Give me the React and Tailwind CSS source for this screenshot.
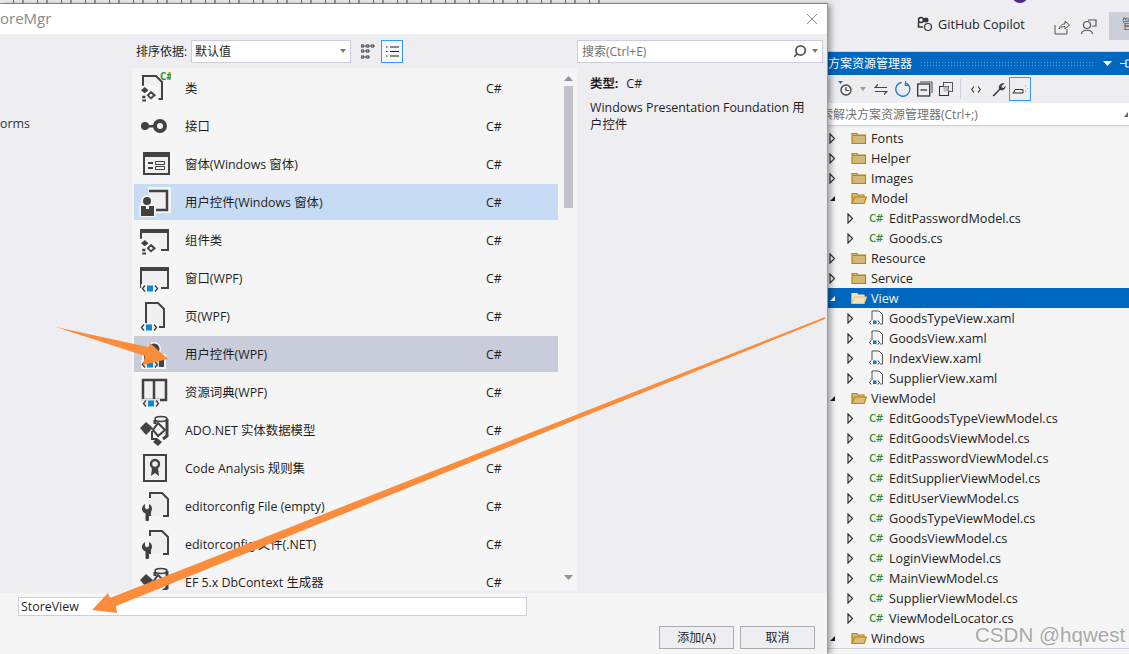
import { Search } from 'lucide-react'

const FONT = { fontFamily: '"Open Sans", "Noto Sans CJK SC", sans-serif' }

const DARK = '#424242'
const LIGHT = '#f0eff1'

// little <> badge with the blue square, used on all the WPF icons
const CodeBadge = ({ x = 0, y = 0 }) => (
  <g transform={`translate(${x} ${y})`}>
    <rect x="-1" y="-1" width="18" height="9" fill="#f5f5f5" opacity="0.9" />
    <path d="M3 0.5 L0.5 3.5 L3 6.5 M13 0.5 L15.5 3.5 L13 6.5" fill="none" stroke={DARK} strokeWidth="1.4" />
    <rect x="5" y="0.5" width="6" height="6" fill="#0a8ad2" />
  </g>
)

const Gears = ({ x = 0, y = 0 }) => (
  <g transform={`translate(${x} ${y}) scale(1.25)`} fill={DARK}>
    <rect x="-1" y="-1" width="15" height="13" fill="#f5f5f5" />
    <path d="M3 0 L6 2.5 L3 5 L0 2.5 Z" />
    <path d="M8 3 L12 6.5 L8 10 L4.5 6.5 Z" />
    <path d="M1 7 h2.500 v2 h-2.500 Z M1 10 h3 v1.500 h-3 Z" />
    <circle cx="8" cy="6.5" r="1.2" fill="#f5f5f5" />
  </g>
)

const FileShape = ({ x, y, w, h }) => (
  <path
    d={`M${x} ${y + h} V${y} H${x + w - 6} L${x + w} ${y + 6} V${y + h} H${x + w - 5}`}
    fill={LIGHT}
    stroke={DARK}
    strokeWidth="2"
  />
)

const Wrench = ({ x, y }) => (
  <path
    transform={`translate(${x} ${y})`}
    d="M1 0 V4 L3 5.500 L5 4 V0 C7.500 1 8 3 8 5 C8 7.500 6.500 8.500 5 9.500 V16 C5 17.500 1.500 17.500 1.500 16 V9.500 C-0.500 8.500 -2 7 -2 5 C-2 3 -1 1 1 0 Z"
    fill={DARK}
  />
)

const WindowShape = () => (
  <>
    <rect x="3" y="6" width="26" height="20" fill={LIGHT} />
    <path d="M2 26 V6 H29 V26 H22" fill="none" stroke={DARK} strokeWidth="2" />
    <rect x="2" y="5" width="27" height="4" fill={DARK} />
  </>
)

function ItemIcon({ type }) {
  return (
    <svg width="32" height="32" viewBox="0 0 32 32" className="shrink-0">
      {type === 'class' && (
        <>
          <FileShape x={4} y={4} w={19} h={23} />
          <Gears x={2} y={15} />
          <text x="21" y="8" fontSize="10" fontWeight="700" fill="#2f8f2f" style={FONT}>C#</text>
        </>
      )}
      {type === 'interface' && (
        <>
          <circle cx="6" cy="16" r="4" fill={DARK} />
          <rect x="8" y="15" width="8" height="2.500" fill={DARK} />
          <circle cx="21" cy="16" r="5" fill="none" stroke={DARK} strokeWidth="4" />
        </>
      )}
      {type === 'form' && (
        <>
          <rect x="5" y="5" width="25" height="21" fill={LIGHT} stroke={DARK} strokeWidth="2" />
          <rect x="5" y="5" width="25" height="4" fill={DARK} />
          <path d="M9 14 h5 v2 h-5 Z M9 19 h5 v2 h-5 Z" fill={DARK} />
          <path d="M16.500 13.500 h9 v3 h-9 Z M16.500 18.500 h9 v3 h-9 Z" fill="none" stroke={DARK} strokeWidth="1" />
        </>
      )}
      {type === 'usercontrol' && (
        <>
          <path d="M9 3 H30 V25 H12 V22" fill="#f5f5f5" stroke="#f5f5f5" strokeWidth="4" />
          <path d="M10 5 H28 V24 H17" fill={LIGHT} stroke={DARK} strokeWidth="2.500" />
          <circle cx="8" cy="15" r="6" fill="#f5f5f5" />
          <rect x="0.500" y="17" width="16" height="14" fill="#f5f5f5" />
          <circle cx="8" cy="15" r="4" fill={DARK} />
          <rect x="2" y="20" width="13" height="10" fill={DARK} />
          <rect x="7" y="20" width="3" height="3" fill="#f5f5f5" />
        </>
      )}
      {type === 'component' && (
        <>
          <WindowShape />
          <Gears x={2} y={16} />
        </>
      )}
      {type === 'window' && (
        <>
          <WindowShape />
          <CodeBadge x={3} y={23} />
        </>
      )}
      {type === 'page' && (
        <>
          <FileShape x={7} y={3} w={18} h={24} />
          <CodeBadge x={2} y={24} />
        </>
      )}
      {type === 'wpfcontrol' && (
        <>
          <circle cx="15" cy="11" r="7" fill="#f5f5f5" />
          <circle cx="15" cy="11" r="5.500" fill={DARK} />
          <rect x="3" y="16" width="24" height="15" fill="#f5f5f5" />
          <rect x="5" y="17" width="20" height="12" fill={DARK} />
          <CodeBadge x={3} y={23} />
        </>
      )}
      {type === 'dict' && (
        <>
          <path d="M4 4 H15 V24 H4 Z M15 4 H27 V24 H15 Z" fill={LIGHT} stroke={DARK} strokeWidth="2.500" />
          <CodeBadge x={4} y={24} />
        </>
      )}
      {type === 'ado' && (
        <>
          <ellipse cx="22" cy="5" rx="6" ry="2.500" fill={LIGHT} stroke={DARK} strokeWidth="1.600" />
          <path d="M16 6 V10 M28 5 V22 L24 25" fill="none" stroke={DARK} strokeWidth="3" />
          <path d="M7 8 L14 14 L7 21 L1 14 Z" fill={DARK} />
          <path d="M13 17 V25 H18 M19 9 L26 16 L19 22 L14 16 Z" fill="none" stroke={DARK} strokeWidth="2" />
          <path d="M18 24 L23 28 L19 32 L14 28 Z" fill={DARK} />
        </>
      )}
      {type === 'analysis' && (
        <>
          <rect x="5" y="3" width="22" height="26" fill={LIGHT} stroke={DARK} strokeWidth="2" />
          <circle cx="16" cy="12" r="4" fill="none" stroke={DARK} strokeWidth="2.400" />
          <path d="M13 16 L12 24 L16 21 L20 24 L19 16 Z" fill={DARK} />
        </>
      )}
      {type === 'config' && (
        <>
          <FileShape x={11} y={3} w={18} h={23} />
          <rect x="8" y="8" width="4" height="13" fill="#f5f5f5" />
          <Wrench x={5} y={14} />
        </>
      )}
    </svg>
  )
}

const ITEMS = [
  ['class', '类'],
  ['interface', '接口'],
  ['form', '窗体(Windows 窗体)'],
  ['usercontrol', '用户控件(Windows 窗体)', 'bg-[#c7dcf4]'],
  ['component', '组件类'],
  ['window', '窗口(WPF)'],
  ['page', '页(WPF)'],
  ['wpfcontrol', '用户控件(WPF)', 'bg-[#c9ccdb]'],
  ['dict', '资源词典(WPF)'],
  ['ado', 'ADO.NET 实体数据模型'],
  ['analysis', 'Code Analysis 规则集'],
  ['config', 'editorconfig File (empty)'],
  ['config', 'editorconfig 文件(.NET)'],
  ['ado', 'EF 5.x DbContext 生成器'],
]

// [level, kind, label, selected]
const TREE = [
  [0, 'folder', 'Fonts'],
  [0, 'folder', 'Helper'],
  [0, 'folder', 'Images'],
  [0, 'open', 'Model'],
  [1, 'cs', 'EditPasswordModel.cs'],
  [1, 'cs', 'Goods.cs'],
  [0, 'folder', 'Resource'],
  [0, 'folder', 'Service'],
  [0, 'open', 'View', true],
  [1, 'xaml', 'GoodsTypeView.xaml'],
  [1, 'xaml', 'GoodsView.xaml'],
  [1, 'xaml', 'IndexView.xaml'],
  [1, 'xaml', 'SupplierView.xaml'],
  [0, 'open', 'ViewModel'],
  [1, 'cs', 'EditGoodsTypeViewModel.cs'],
  [1, 'cs', 'EditGoodsViewModel.cs'],
  [1, 'cs', 'EditPasswordViewModel.cs'],
  [1, 'cs', 'EditSupplierViewModel.cs'],
  [1, 'cs', 'EditUserViewModel.cs'],
  [1, 'cs', 'GoodsTypeViewModel.cs'],
  [1, 'cs', 'GoodsViewModel.cs'],
  [1, 'cs', 'LoginViewModel.cs'],
  [1, 'cs', 'MainViewModel.cs'],
  [1, 'cs', 'SupplierViewModel.cs'],
  [1, 'cs', 'ViewModelLocator.cs'],
  [0, 'open', 'Windows'],
]

const Expander = ({ open, selected }) =>
  open ? (
    <svg width="7" height="9" viewBox="0 0 7 9" className="shrink-0">
      <path d="M6 2 V7 H1 Z" fill={selected ? '#fff' : '#1e1e1e'} />
    </svg>
  ) : (
    <svg width="7" height="11" viewBox="0 0 7 11" className="shrink-0">
      <path d="M1 1 L5.500 5.500 L1 10 Z" fill="none" stroke="#333" strokeWidth="1.200" />
    </svg>
  )

const FolderIcon = ({ open, selected }) => (
  <svg width="16" height="13" viewBox="0 0 16 13" className="shrink-0">
    {open ? (
      <>
        <path d="M1 11.500 V1.500 H6 L7 3 H13 V5" fill={selected ? '#f5e3b5' : '#dcb67a'} stroke={selected ? '#f5e3b5' : '#b8860b'} strokeWidth="1.200" />
        <path d="M1 11.500 L3.500 5 H15.500 L13 11.500 Z" fill={selected ? '#f5e3b5' : '#d9bc7c'} stroke={selected ? '#e0c890' : '#b8860b'} strokeWidth="1.200" />
      </>
    ) : (
      <>
        <path d="M1 11.500 V1.500 H6 L7 3 H14.500 V11.500 Z" fill="#d3b878" stroke="#b8860b" strokeWidth="1.200" />
        <path d="M1.500 3.500 H14" stroke="#b8860b" strokeWidth="1" />
      </>
    )}
  </svg>
)

const XamlIcon = () => (
  <svg width="15" height="16" viewBox="0 0 15 16" className="shrink-0">
    <path d="M3 10 V1 H10 L13.500 4.500 V14 H11" fill="#f5f5f5" stroke="#555" strokeWidth="1" />
    <path d="M2 10.500 L0.500 12.500 L2 14.500 M9 10.500 L10.500 12.500 L9 14.500" fill="none" stroke="#333" strokeWidth="1" />
    <rect x="4" y="10.500" width="3.500" height="3.500" fill="#0a75c9" />
  </svg>
)

function TreeRow({ level, kind, label, selected }) {
  const isOpen = kind === 'open'
  return (
    <div className={`h-5 flex items-center text-[12.650px] ${selected ? 'bg-[#0067c0] text-[#f5f5f5]' : 'text-[#222]'}`}>
      <div className={`flex items-center shrink-0 ${level === 0 ? 'w-[23px] pl-[1px]' : 'w-[41px] pl-[19px]'}`}>
        <Expander open={isOpen} selected={selected} />
      </div>
      {kind === 'cs' && <span className="w-[20px] shrink-0 text-[11px] font-semibold text-[#2f8f2f]">C#</span>}
      {kind === 'xaml' && <div className="w-[20px] shrink-0"><XamlIcon /></div>}
      {(kind === 'folder' || isOpen) && <div className="w-[20px] shrink-0"><FolderIcon open={isOpen} selected={selected} /></div>}
      <span className="whitespace-nowrap">{label}</span>
    </div>
  )
}

function Dialog() {
  return (
    <div className="relative z-10 w-[828px] shrink-0 flex flex-col h-full bg-[#f5f5f5] border-r border-[#9a9a9a] shadow-[3px_0_6px_rgba(0,0,0,0.35)]">
      <div className="h-[30px] shrink-0 bg-white flex items-center justify-between pr-[9px] text-[15px] text-[#8a8a8a]">
        <span className="pb-[2px]">oreMgr</span>
        <svg width="12" height="12" viewBox="0 0 12 12">
          <path d="M1 1 L11 11 M11 1 L1 11" stroke="#8a8a8a" strokeWidth="1" />
        </svg>
      </div>

      <div className="h-[559px] shrink-0 bg-[#eeeef2] flex flex-col">
        <div className="h-[34px] shrink-0 flex items-center text-[12px] text-[#1e1e1e]">
          <span className="ml-[136px] w-[55px] pt-[2px] whitespace-nowrap">排序依据:</span>
          <div className="w-[160px] h-[23px] bg-white border border-[#cccedb] flex items-center justify-between pl-[3px] pr-[3px]">
            <span className="pt-[2px]">默认值</span>
            <svg width="6" height="4" viewBox="0 0 6 4" className="mr-[1px]"><path d="M0 0 H6 L3 4 Z" fill="#777" /></svg>
          </div>
          <svg width="14" height="15" viewBox="0 0 14 15" className="ml-[10px]">
            <path d="M0 1 h3 v2 h-3 Z M5 1 h3 v2 h-3 Z M10 1 h3 v2 h-3 Z M0 6 h3 v2 h-3 Z M5 6 h3 v2 h-3 Z M0 12 h3 v2 h-3 Z M5 12 h3 v2 h-3 Z" fill="none" stroke="#333" strokeWidth="1" />
          </svg>
          <div className="ml-[6px] w-[22px] h-[23px] border border-[#3399ff] bg-[#f4f6fa] flex items-center justify-center">
            <svg width="13" height="11" viewBox="0 0 13 11">
              <path d="M0 1 h1.500 M4 1 H13 M0 5.500 h1.500 M4 5.500 H13 M0 10 h1.500 M4 10 H13" stroke="#1e1e1e" strokeWidth="1" />
            </svg>
          </div>
          <div className="ml-[174px] w-[246px] h-[23px] bg-white border border-[#cccedb] flex items-center pl-[4px] pr-[3px] text-[#717171]">
            <span className="flex-1 pt-[2px]">搜索(Ctrl+E)</span>
            <Search size={14} strokeWidth={3} color="#555" className="-scale-x-100" />
            <svg width="6" height="4" viewBox="0 0 6 4" className="ml-[5px] mr-[1px]"><path d="M0 0 H6 L3 4 Z" fill="#777" /></svg>
          </div>
        </div>

        <div className="flex-1 flex min-h-0">
          <div className="w-[132px] shrink-0 pt-[47px] text-[12.400px] text-[#333] overflow-hidden">orms</div>
          <div className="w-[445px] shrink-0 bg-[#f5f5f5] h-[522px] flex overflow-hidden">
            <div className="w-[427px] shrink-0 pl-[2px] pt-[2px]">
              {ITEMS.map(([type, label, hl], i) => (
                <div key={i} className={`h-[36px] mb-[2px] w-[424px] flex items-center text-[12.400px] text-[#1e1e1e] ${hl || ''}`}>
                  <div className="w-[51px] pl-[5px] shrink-0"><ItemIcon type={type} /></div>
                  <span className="w-[301px] shrink-0 pt-[2px] whitespace-nowrap">{label}</span>
                  <span className="pt-[2px]">C#</span>
                </div>
              ))}
            </div>
            <div className="w-[18px] shrink-0 flex flex-col items-center">
              <svg width="9" height="5" viewBox="0 0 9 5" className="mt-[8px]"><path d="M4.500 0 L9 5 H0 Z" fill="#8f90a0" /></svg>
              <div className="w-[9px] h-[122px] mt-[5px] bg-[#c2c3c9]" />
              <svg width="9" height="5" viewBox="0 0 9 5" className="mt-[367px]"><path d="M0 0 H9 L4.500 5 Z" fill="#8f90a0" /></svg>
            </div>
          </div>
          <div className="flex-1 pl-[13px] pr-[16px] pt-[7px] text-[12.400px] text-[#1e1e1e] leading-[17px]">
            <div className="flex gap-[8px]"><b className="font-bold">类型:</b><span>C#</span></div>
            <p className="mt-[7px] leading-[17px]">Windows Presentation Foundation 用户控件</p>
          </div>
        </div>
      </div>

      <div className="flex-1 flex flex-col">
        <div className="ml-[18px] mt-[4px] w-[509px] h-[19px] bg-white border border-[#cccedb] pl-[2px] text-[12.400px] leading-[17px] text-[#1e1e1e]">StoreView</div>
        <div className="mt-[10px] pr-[12px] flex justify-end gap-[6px]">
          <button className="w-[75px] h-[23px] bg-[#eeeef2] border border-[#acacac] text-[12px] text-[#1e1e1e]">添加(A)</button>
          <button className="w-[75px] h-[23px] bg-[#eeeef2] border border-[#acacac] text-[12px] text-[#1e1e1e]">取消</button>
        </div>
      </div>
    </div>
  )
}

function SolutionExplorer() {
  return (
    <div className="flex-1 min-w-0 flex flex-col bg-[#eeeef2] overflow-hidden">
      <div className="h-[48px] shrink-0 flex items-start pt-[9px] pl-[89px] border-b border-[#cfd0db] text-[12.650px] text-[#222]">
        <svg width="16" height="16" viewBox="0 0 16 16" className="mt-[3px] shrink-0">
          <circle cx="4" cy="4" r="2.500" fill="none" stroke="#333" strokeWidth="1.500" />
          <circle cx="9" cy="4" r="2.500" fill="#333" />
          <path d="M1.500 6 V11 H6" fill="none" stroke="#333" strokeWidth="1.500" />
          <circle cx="11" cy="11" r="3.500" fill="#eeeef2" stroke="#333" strokeWidth="1.200" />
        </svg>
        <span className="ml-[5px] mt-[2px] whitespace-nowrap">GitHub Copilot</span>
        <svg width="16" height="16" viewBox="0 0 16 16" className="ml-[29px] mt-[6px] shrink-0">
          <path d="M1 6 V15 H13 V10 M5 10 C6 6 9 5 11 5 V2 L15.500 6 L11 10 V7.500 C9 7.500 6.500 8 5 10 Z" fill="none" stroke="#555" strokeWidth="1" />
        </svg>
        <svg width="16" height="16" viewBox="0 0 16 16" className="ml-[11px] mt-[6px] shrink-0">
          <circle cx="6" cy="6" r="3.500" fill="none" stroke="#555" strokeWidth="1.200" />
          <path d="M0.500 15 C1 10 11 10 11.500 15 M7 1 H15 V7 H11" fill="none" stroke="#555" strokeWidth="1.200" />
        </svg>
        <div className="ml-[12px] -mt-[1px] w-[30px] h-[28px] bg-[#ccced9] pl-[13px] pt-[2px] text-[#666] shrink-0 overflow-hidden whitespace-nowrap">管理</div>
      </div>

      <div className="h-[23px] shrink-0 bg-[#0067c0] flex items-center text-white text-[12px]">
        <span className="whitespace-nowrap">方案资源管理器</span>
        <div className="ml-[8px] w-[173px] h-[6px] shrink-0 bg-[radial-gradient(#5aa0dc_1px,transparent_1px)] bg-[length:3px_3px]" />
        <svg width="9" height="5" viewBox="0 0 9 5" className="ml-[10px] shrink-0"><path d="M0 0 H9 L4.500 5 Z" fill="#fff" /></svg>
        <svg width="10" height="9" viewBox="0 0 10 9" className="ml-[8px] shrink-0"><path d="M0 4.500 H6 M6 1 V8 M6 1 H10 M6 8 H10" stroke="#fff" strokeWidth="1.200" fill="none" /></svg>
      </div>

      <div className="h-[28px] shrink-0 flex items-center">
        <div className="w-[1px] h-[20px] bg-[#cccedb] ml-[1px]" />
        <svg width="17" height="18" viewBox="0 0 17 18" className="ml-[8px] shrink-0">
          <path d="M0 1 H5 L2.500 4 Z" fill="#1b6fc0" />
          <circle cx="8" cy="10" r="5" fill="none" stroke="#444" strokeWidth="1.400" />
          <path d="M8 7 V10.500 H11" fill="none" stroke="#444" strokeWidth="1.200" />
        </svg>
        <svg width="6" height="4" viewBox="0 0 6 4" className="ml-[5px] shrink-0"><path d="M0 0 H6 L3 4 Z" fill="#999" /></svg>
        <svg width="14" height="11" viewBox="0 0 14 11" className="ml-[8px] shrink-0">
          <path d="M4 0.500 L1 3.500 H13 M10 10.500 L13 7.500 H1" fill="none" stroke="#444" strokeWidth="1.100" />
        </svg>
        <svg width="16" height="16" viewBox="0 0 16 16" className="ml-[7px] shrink-0">
          <path d="M6 1.500 A7 7 0 1 0 11 2 M10 0 V4 H14" transform="rotate(5 8 8)" fill="none" stroke="#1b78c8" strokeWidth="1.300" />
        </svg>
        <svg width="16" height="16" viewBox="0 0 16 16" className="ml-[6px] shrink-0">
          <path d="M3 1 H15 V12" fill="none" stroke="#444" strokeWidth="1" />
          <rect x="0.700" y="3" width="12" height="12" fill="none" stroke="#333" strokeWidth="1.300" />
          <path d="M3.500 9 H10" stroke="#333" strokeWidth="1.300" />
        </svg>
        <svg width="14" height="14" viewBox="0 0 14 14" className="ml-[6px] shrink-0">
          <rect x="4.500" y="0.500" width="9" height="9" fill="none" stroke="#555" strokeWidth="1" />
          <rect x="0.500" y="4.500" width="9" height="9" fill="#eeeef2" stroke="#333" strokeWidth="1" />
          <rect x="4.500" y="4.500" width="5" height="5" fill="#bbb" />
        </svg>
        <div className="w-[1px] h-[20px] bg-[#cccedb] ml-[7px]" />
        <svg width="10" height="7" viewBox="0 0 10 7" className="ml-[10px] shrink-0">
          <path d="M3 0.500 L0.700 3.500 L3 6.500 M7 0.500 L9.300 3.500 L7 6.500" fill="none" stroke="#333" strokeWidth="1.100" />
        </svg>
        <svg width="15" height="15" viewBox="0 0 15 15" className="ml-[10px] shrink-0">
          <path d="M1.500 13.500 L8 7 C7 3 10.500 0.500 13.500 1.500 L10.500 4 L11 5.500 L12.500 6 L14.500 3.500 C15 7 12 9 9 8 L3 14.500 Z" fill="#3c3c3c" />
        </svg>
        <div className="ml-[3px] w-[22px] h-[24px] border border-[#3399ff] flex items-center justify-center shrink-0">
          <svg width="16" height="9" viewBox="0 0 16 9">
            <path d="M0.500 8 H11 V4.500 H3 L1.500 8" fill="none" stroke="#333" strokeWidth="1" />
            <path d="M13 1 h1 M15 3.500 h1 M13 6 h1" stroke="#c9a227" strokeWidth="1" />
          </svg>
        </div>
      </div>

      <div className="h-[23px] shrink-0 bg-white border-b border-[#cccedb] flex items-center justify-between pr-[1px] text-[12px] text-[#717171] overflow-hidden">
        <span className="whitespace-nowrap -ml-[7px] pt-[2px]">索解决方案资源管理器(Ctrl+;)</span>
        <svg width="4" height="5" viewBox="0 0 4 5"><path d="M0 5 L4 0 V5 Z" fill="#666" /></svg>
      </div>

      <div className="h-[2px] shrink-0" />
      <div className="flex-1 bg-[#f5f5f5]">
        <div className="border-b border-[#cfd0db]">
          {TREE.map(([level, kind, label, selected]) => (
            <TreeRow key={label} level={level} kind={kind} label={label} selected={selected} />
          ))}
        </div>
      </div>
    </div>
  )
}

export default function App() {
  return (
    <div className="relative w-[1129px] h-[654px] overflow-hidden bg-[#eeeef2] flex flex-col" style={FONT}>
      <div className="h-[4px] shrink-0 w-[828px] border-b border-[#9a9a9a] flex">
        <div className="w-[613px] h-[3px] bg-[repeating-linear-gradient(90deg,#eeeef2_0px,#eeeef2_13px,#777_13px,#777_14px,#eeeef2_14px,#eeeef2_22px,#999_22px,#999_24px)]" />
      </div>
      <div className="flex-1 min-h-0 flex">
        <Dialog />
        <SolutionExplorer />
      </div>

      {/* annotation arrows drawn on top of the screenshot */}
      <svg width="1129" height="654" viewBox="0 0 1129 654" className="absolute inset-0 z-20 pointer-events-none">
        <polygon points="56,327 148,347 150,343 168,359 143,365 145,356" fill="#fb8c3c" />
        <polygon points="825,317 825,319 116,606 117,613 92,610 108,593 110,598" fill="#fb8c3c" />
      </svg>

      <div className="absolute z-20 left-[1012px] -top-[13px] w-[16px] h-[16px] rounded-full bg-[#4b2a82]" />
      <div
        className="absolute z-20 left-[975px] top-[620px] text-[20.600px] text-[#a9a9a9] whitespace-nowrap [text-shadow:0_0_2px_#fff]"
        style={{ fontFamily: '"Liberation Sans", sans-serif' }}
      >
        CSDN @hqwest
      </div>
    </div>
  )
}
